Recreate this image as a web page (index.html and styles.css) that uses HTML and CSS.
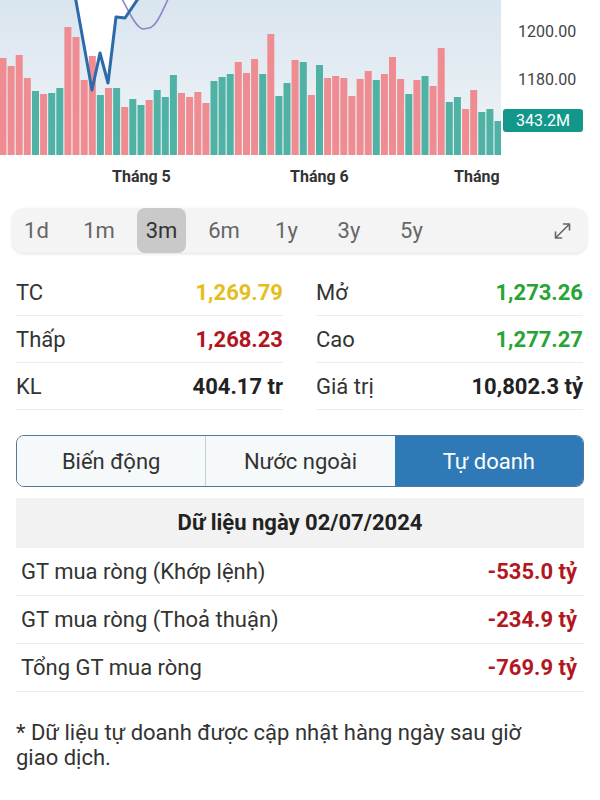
FILE: index.html
```html
<!DOCTYPE html>
<html lang="vi">
<head>
    <meta charset="UTF-8">
    <meta name="viewport" content="width=device-width, initial-scale=1.0">
    <title>VNINDEX - Tự doanh</title>
    <link rel="stylesheet" href="styles.css">
</head>
<body>

<div class="chart">
    <svg class="chart-svg" width="600" height="196" viewBox="0 0 600 196">
        <defs>
            <linearGradient id="areaFill" x1="0" y1="0" x2="0" y2="1">
                <stop offset="0" stop-color="#d9e5ef"/>
                <stop offset="1" stop-color="#f0f4f7"/>
            </linearGradient>
            <clipPath id="plotClip">
                <rect x="0" y="0" width="501" height="196"/>
            </clipPath>
        </defs>

        <g clip-path="url(#plotClip)">
            <rect x="0" y="0" width="501" height="155" fill="url(#areaFill)"/>
            <polygon class="area-gap" points="75,0 92,90 100,53 108,83 116,17 125,18 137,0"/>

            <!-- volume -->
            <rect class="bar-down" x="-0.5" y="58" width="7" height="97"/>
            <rect class="bar-down" x="7.6" y="66" width="7" height="89"/>
            <rect class="bar-down" x="15.7" y="55" width="7" height="100"/>
            <rect class="bar-down" x="23.8" y="78" width="7" height="77"/>
            <rect class="bar-up" x="32" y="91" width="7" height="64"/>
            <rect class="bar-down" x="40.1" y="94" width="7" height="61"/>
            <rect class="bar-up" x="48.2" y="93" width="7" height="62"/>
            <rect class="bar-up" x="56.3" y="88" width="7" height="67"/>
            <rect class="bar-down" x="64.4" y="27" width="7" height="128"/>
            <rect class="bar-down" x="72.5" y="37" width="7" height="118"/>
            <rect class="bar-down" x="80.7" y="80" width="7" height="75"/>
            <rect class="bar-down" x="88.8" y="56" width="7" height="99"/>
            <rect class="bar-up" x="96.9" y="95" width="7" height="60"/>
            <rect class="bar-down" x="105" y="88" width="7" height="67"/>
            <rect class="bar-up" x="113.1" y="88" width="7" height="67"/>
            <rect class="bar-down" x="121.2" y="107" width="7" height="48"/>
            <rect class="bar-up" x="129.3" y="99" width="7" height="56"/>
            <rect class="bar-up" x="137.5" y="105" width="7" height="50"/>
            <rect class="bar-down" x="145.6" y="100" width="7" height="55"/>
            <rect class="bar-up" x="153.7" y="90" width="7" height="65"/>
            <rect class="bar-up" x="161.8" y="97" width="7" height="58"/>
            <rect class="bar-up" x="169.9" y="75" width="7" height="80"/>
            <rect class="bar-down" x="178" y="93" width="7" height="62"/>
            <rect class="bar-down" x="186.1" y="97" width="7" height="58"/>
            <rect class="bar-down" x="194.3" y="92" width="7" height="63"/>
            <rect class="bar-down" x="202.4" y="103" width="7" height="52"/>
            <rect class="bar-up" x="210.5" y="81" width="7" height="74"/>
            <rect class="bar-up" x="218.6" y="77" width="7" height="78"/>
            <rect class="bar-up" x="226.7" y="74" width="7" height="81"/>
            <rect class="bar-down" x="234.8" y="62" width="7" height="93"/>
            <rect class="bar-down" x="243" y="73" width="7" height="82"/>
            <rect class="bar-down" x="251.1" y="59" width="7" height="96"/>
            <rect class="bar-up" x="259.2" y="74" width="7" height="81"/>
            <rect class="bar-down" x="267.3" y="34" width="7" height="121"/>
            <rect class="bar-up" x="275.4" y="96" width="7" height="59"/>
            <rect class="bar-up" x="283.5" y="83" width="7" height="72"/>
            <rect class="bar-down" x="291.6" y="60" width="7" height="95"/>
            <rect class="bar-up" x="299.8" y="62" width="7" height="93"/>
            <rect class="bar-down" x="307.9" y="95" width="7" height="60"/>
            <rect class="bar-up" x="316" y="65" width="7" height="90"/>
            <rect class="bar-down" x="324.1" y="78" width="7" height="77"/>
            <rect class="bar-down" x="332.2" y="76" width="7" height="79"/>
            <rect class="bar-down" x="340.3" y="78" width="7" height="77"/>
            <rect class="bar-down" x="348.4" y="96" width="7" height="59"/>
            <rect class="bar-down" x="356.6" y="79" width="7" height="76"/>
            <rect class="bar-down" x="364.7" y="71" width="7" height="84"/>
            <rect class="bar-up" x="372.8" y="80" width="7" height="75"/>
            <rect class="bar-down" x="380.9" y="74" width="7" height="81"/>
            <rect class="bar-down" x="389" y="57" width="7" height="98"/>
            <rect class="bar-down" x="397.1" y="79" width="7" height="76"/>
            <rect class="bar-up" x="405.3" y="94" width="7" height="61"/>
            <rect class="bar-down" x="413.4" y="80" width="7" height="75"/>
            <rect class="bar-up" x="421.5" y="76" width="7" height="79"/>
            <rect class="bar-down" x="429.6" y="86" width="7" height="69"/>
            <rect class="bar-down" x="437.7" y="48" width="7" height="107"/>
            <rect class="bar-up" x="445.8" y="102" width="7" height="53"/>
            <rect class="bar-up" x="453.9" y="97" width="7" height="58"/>
            <rect class="bar-down" x="462.1" y="109" width="7" height="46"/>
            <rect class="bar-down" x="470.2" y="90" width="7" height="65"/>
            <rect class="bar-up" x="478.3" y="112" width="7" height="43"/>
            <rect class="bar-up" x="486.4" y="109" width="7" height="46"/>
            <rect class="bar-up" x="494.5" y="121" width="7" height="34"/>

            <!-- lines -->
            <path class="line-ma" d="M121,-3 C128,10 136,28 143,29 L149,28 C156,27 162,12 169,-3"/>
            <polyline class="line-price" points="74,-10 92,90 100,53 108,83 116,17 125,18 144,-10"/>

            <text class="x-label" x="112" y="182">Tháng 5</text>
            <text class="x-label" x="290" y="182">Tháng 6</text>
            <text class="x-label" x="454" y="182">Tháng 7</text>
        </g>

        <text class="y-label" x="518" y="37">1200.00</text>
        <text class="y-label" x="518" y="85">1180.00</text>
        <rect class="vol-badge" x="503" y="109" width="80" height="23" rx="3"/>
        <text class="vol-text" x="543" y="126">343.2M</text>
    </svg>
</div>

<div class="periods">
    <span class="period">1d</span>
    <span class="period">1m</span>
    <span class="period active">3m</span>
    <span class="period">6m</span>
    <span class="period">1y</span>
    <span class="period">3y</span>
    <span class="period">5y</span>
    <span class="expand">
        <svg width="21" height="20" viewBox="0 0 21 20">
            <path d="M3.5 17 L17.5 3 M11.5 3 H17.5 V9 M3.5 11 V17 H9.5" fill="none" stroke="#666" stroke-width="1.6" stroke-linecap="round" stroke-linejoin="round"/>
        </svg>
    </span>
</div>

<div class="stats">
    <div class="stat"><span>TC</span><b class="ref">1,269.79</b></div>
    <div class="stat"><span>Mở</span><b class="up">1,273.26</b></div>
    <div class="stat"><span>Thấp</span><b class="down">1,268.23</b></div>
    <div class="stat"><span>Cao</span><b class="up">1,277.27</b></div>
    <div class="stat"><span>KL</span><b>404.17 tr</b></div>
    <div class="stat"><span>Giá trị</span><b>10,802.3 tỷ</b></div>
</div>

<div class="tabs">
    <div class="tab">Biến động</div>
    <div class="tab">Nước ngoài</div>
    <div class="tab active">Tự doanh</div>
</div>

<div class="data-head">Dữ liệu ngày 02/07/2024</div>
<div class="data-row"><span>GT mua ròng (Khớp lệnh)</span><b>-535.0 tỷ</b></div>
<div class="data-row"><span>GT mua ròng (Thoả thuận)</span><b>-234.9 tỷ</b></div>
<div class="data-row"><span>Tổng GT mua ròng</span><b>-769.9 tỷ</b></div>

<p class="note">* Dữ liệu tự doanh được cập nhật hàng ngày sau giờ giao dịch.</p>

</body>
</html>
```

FILE: styles.css
```css
body {
    margin: 0;
    font-family: Roboto, "Noto Sans", sans-serif;
    color: #333;
    background-color: white;
}

.chart-svg {
    display: block;
}

.area-gap {
    fill: white;
}

.bar-up {
    fill: #4fb2a5;
}

.bar-down {
    fill: #ef8c91;
}

.line-price {
    fill: none;
    stroke: #2c6aa9;
    stroke-width: 3;
    stroke-linejoin: round;
}

.line-ma {
    fill: none;
    stroke: #8c86c4;
    stroke-width: 1.6;
}

.x-label {
    font-size: 16px;
    font-weight: bold;
    fill: #333;
}

.y-label {
    font-size: 16px;
    fill: #444;
}

.vol-badge {
    fill: #13978a;
}

.vol-text {
    font-size: 16px;
    fill: white;
    text-anchor: middle;
}

/* periods */
.periods {
    display: flex;
    gap: 13.5px;
    height: 45px;
    margin: 12px 13px 0 12px;
    background-color: #f4f4f4;
    border-radius: 12px;
    box-shadow: 0 1px 3px rgba(0, 0, 0, 0.12);
}

.period {
    width: 49px;
    line-height: 45px;
    text-align: center;
    font-size: 22px;
    color: #666;
    border-radius: 8px;
}

.period.active {
    background-color: #c9c9c9;
    color: #333;
}

.expand {
    display: flex;
    align-items: center;
    margin-left: auto;
    padding-right: 14px;
}

/* stats */
.stats {
    display: grid;
    grid-template-columns: 1fr 1fr;
    column-gap: 33px;
    margin: 16px 17px 0 16px;
}

.stat {
    display: flex;
    justify-content: space-between;
    align-items: center;
    height: 47px;
    box-sizing: border-box;
    border-bottom: 1px solid #ececec;
    font-size: 22px;
}

.stat b {
    color: #222;
}

.stat b.ref {
    color: #e6bd1c;
}

.stat b.up {
    color: #27a534;
}

.stat b.down {
    color: #b3131f;
}

/* tabs */
.tabs {
    display: flex;
    height: 52px;
    margin: 25px 16px 0 16px;
    border: 1px solid #50799c;
    border-radius: 8px;
    overflow: hidden;
    box-sizing: border-box;
}

.tab {
    flex: 1;
    display: flex;
    justify-content: center;
    align-items: center;
    font-size: 22px;
    background-color: #f6f9fa;
}

.tab + .tab {
    border-left: 1px solid #c9ced2;
}

.tab.active {
    background-color: #2e79b6;
    color: white;
    border-left: none;
}

/* proprietary trading */
.data-head {
    margin: 11px 16px 0 16px;
    height: 50px;
    line-height: 50px;
    text-align: center;
    font-size: 22px;
    font-weight: bold;
    color: #222;
    background-color: #f2f2f2;
}

.data-row {
    display: flex;
    justify-content: space-between;
    align-items: center;
    height: 48px;
    margin: 0 16px;
    padding: 0 7px 0 5px;
    box-sizing: border-box;
    border-bottom: 1px solid #ececec;
    font-size: 22px;
}

.data-row b {
    color: #b3171f;
}

.note {
    margin: 28px 50px 0 16px;
    font-size: 22px;
    line-height: 25px;
    color: #333;
}
```
